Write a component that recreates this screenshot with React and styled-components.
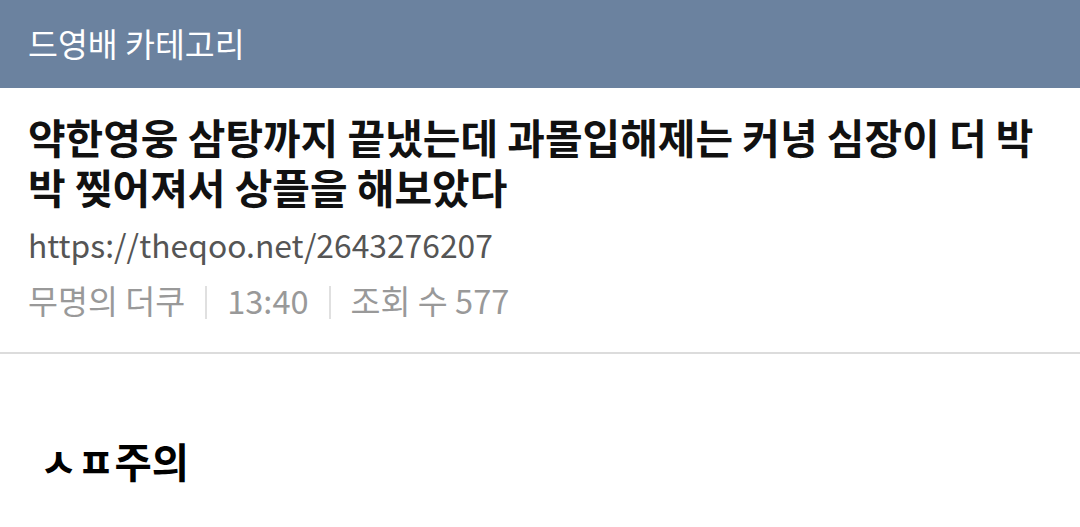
import React from 'react';
import styled, { createGlobalStyle } from 'styled-components';

const GlobalStyle = createGlobalStyle`
  html, body {
    margin: 0;
    padding: 0;
    background: #fff;
    font-family: "Noto Sans CJK KR", "Noto Sans", sans-serif;
  }
`;

const Page = styled.div`
  width: 1080px;
  min-height: 527px;
  background: #fff;
  overflow: hidden;
`;

const CategoryBar = styled.header`
  height: 88px;
  background: #6b829f;
  display: flex;
  align-items: center;
  padding: 0 28px 4px;
  color: #fff;
  font-size: 32.5px;
  box-sizing: border-box;
`;

const ArticleHead = styled.section`
  padding: 24px 28px 30px;
  border-bottom: 2px solid #dcdcdc;
`;

const Title = styled.h1`
  margin: 0;
  font-size: 40.9px;
  font-weight: 700;
  line-height: 50px;
  color: #111;
  word-break: break-all;
`;

const Url = styled.div`
  margin-top: 10px;
  font-size: 31.8px;
  line-height: 44px;
  color: #555;
`;

const Meta = styled.div`
  margin-top: 12px;
  display: flex;
  align-items: center;
  font-size: 32.6px;
  line-height: 44px;
  color: #999;
`;

const Sep = styled.span`
  width: 2px;
  height: 33px;
  background: #e0e0e0;
  margin: 4px 20px 0;
`;

const Body = styled.article`
  padding: 82px 40px 0;
`;

const Warning = styled.p`
  margin: 0;
  font-size: 40.5px;
  font-weight: 700;
  color: #000;
  line-height: 50px;
`;

export default function App() {
  return (
    <Page>
      <GlobalStyle />
      <CategoryBar>드영배 카테고리</CategoryBar>
      <ArticleHead>
        <Title>약한영웅 삼탕까지 끝냈는데 과몰입해제는 커녕 심장이 더 박박 찢어져서 상플을 해보았다</Title>
        <Url>https://theqoo.net/2643276207</Url>
        <Meta>
          <span>무명의 더쿠</span>
          <Sep />
          <span>13:40</span>
          <Sep />
          <span>조회 수 577</span>
        </Meta>
      </ArticleHead>
      <Body>
        <Warning>ㅅㅍ주의</Warning>
      </Body>
    </Page>
  );
}
